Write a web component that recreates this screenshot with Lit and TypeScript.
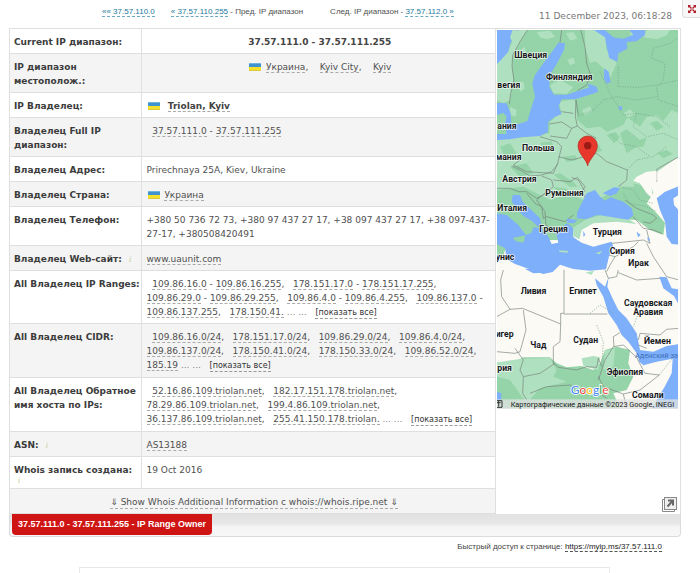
import { LitElement, html, css, svg, nothing } from "lit";
import { customElement } from "lit/decorators.js";

const NB = "\u00a0";

const link = (text: string, cls = "") => html`<a class=${cls} href="#">${text}</a>`;

/** Comma-separated list of links; a pair is drawn as "from - to". */
const list = (items: string[][]) =>
  items.map(
    (pair, i) =>
      html`${i ? `, ${NB} ` : NB + NB}${pair.map((p, j) => html`${j ? " - " : ""}${link(p)}`)}`
  );

const more = html` <span class="dots">... ...</span> ${NB} <button class="more" type="button">[показать все]</button>`;

const flag = html`<svg class="flag" width="12" height="8" viewBox="0 0 12 8" aria-hidden="true">
  <rect width="12" height="4" fill="#3f94cf" />
  <rect width="12" height="1" fill="#6db4de" />
  <rect y="4" width="12" height="4" fill="#f5e02c" />
  <rect x="0" y="7" width="12" height="1" fill="#dcc93c" />
</svg>`;

interface Row {
  label: string;
  value: unknown;
  hint?: "beside" | "below";
  center?: boolean;
  strong?: boolean;
  roomy?: boolean;
}

const rows: Row[] = [
  { label: "Current IP диапазон:", value: "37.57.111.0 - 37.57.111.255", center: true, strong: true },
  {
    label: "IP диапазон местополож.:",
    value: html`${flag} ${link("Украина")}, ${NB} ${NB}${link("Kyiv City")}, ${NB} ${NB}${link("Kyiv")}`,
    center: true,
  },
  { label: "IP Владелец:", value: html`${flag} ${NB}${link("Triolan, Kyiv")}`, strong: true },
  { label: "Владелец Full IP диапазон:", value: list([["37.57.111.0", "37.57.111.255"]]) },
  { label: "Владелец Адрес:", value: "Prirechnaya 25A, Kiev, Ukraine" },
  { label: "Владелец Страна:", value: html`${flag} ${link("Украина")}` },
  {
    label: "Владелец Телефон:",
    value: "+380 50 736 72 73, +380 97 437 27 17, +38 097 437 27 17, +38 097-437-27-17, +380508420491",
  },
  { label: "Владелец Web-сайт:", value: link("www.uaunit.com"), hint: "beside" },
  {
    label: "All Владелец IP Ranges:",
    value: html`${list([
      ["109.86.16.0", "109.86.16.255"],
      ["178.151.17.0", "178.151.17.255"],
      ["109.86.29.0", "109.86.29.255"],
      ["109.86.4.0", "109.86.4.255"],
      ["109.86.137.0", "109.86.137.255"],
      ["178.150.41."],
    ])}${more}`,
  },
  {
    label: "All Владелец CIDR:",
    roomy: true,
    value: html`${list([
      ["109.86.16.0/24"],
      ["178.151.17.0/24"],
      ["109.86.29.0/24"],
      ["109.86.4.0/24"],
      ["109.86.137.0/24"],
      ["178.150.41.0/24"],
      ["178.150.33.0/24"],
      ["109.86.52.0/24"],
    ])}, ${link("185.19")}${more}`,
  },
  {
    label: "All Владелец Обратное имя хоста по IPs:",
    roomy: true,
    value: html`${list([
      ["52.16.86.109.triolan.net"],
      ["182.17.151.178.triolan.net"],
      ["78.29.86.109.triolan.net"],
      ["199.4.86.109.triolan.net"],
      ["36.137.86.109.triolan.net"],
      ["255.41.150.178.triolan."],
    ])}${more}`,
  },
  { label: "ASN:", value: link("AS13188"), hint: "beside" },
  { label: "Whois запись создана:", value: "19 Oct 2016", hint: "below" },
];

const label = (x: number, y: number, t: string) => svg`<text class="place" x=${x} y=${y}>${t}</text>`;

@customElement("region-map")
export class RegionMap extends LitElement {
  static styles = css`
    :host { display: block; }
    svg { display: block; width: 100%; height: auto; }
    .sea { fill: #7eaffa; }
    .green { fill: #95d3a8; }
    .pale { fill: #afe0bf; }
    .sand { fill: #fcfaf4; }
    .border { fill: none; stroke: #77827b; stroke-width: 2; }
    .region { fill: none; stroke: #77a587; stroke-width: 2; stroke-dasharray: 4 4; }
    .place {
      font: 700 26px Roboto, "Liberation Sans", sans-serif;
      fill: #17191b; stroke: #fff; stroke-width: 5; stroke-opacity: 0.75;
      paint-order: stroke; stroke-linejoin: round;
    }
    .water { font: 400 22px Roboto, sans-serif; fill: #3f6fb8; }
    .brand {
      font: 400 36px Lato, sans-serif; stroke: #fff; stroke-width: 5; paint-order: stroke;
    }
    .credit { font: 22px Roboto, sans-serif; fill: #222; }
  `;

  render() {
    return html`<svg viewBox="0 0 543 1137" role="img" aria-label="Карта">
      <rect class="sand" width="543" height="1137" />
      <g transform="translate(-21,-90)">
        <path class="green" d="M21 90H567V470L540 486 500 516 480 550 490 580 470 610 500 640 525 668 520 705 480 690 440 660 330 655 290 680 250 690 250 720H20Z" />
        <path class="pale" d="M84 90H112L92 124 70 164 66 200 70 240 60 300 40 310 21 300V190L55 150Z" />
        <path class="pale" d="M140 96 180 92 196 110 170 118 150 112ZM92 150 104 140 110 160 96 172ZM84 250 100 244 104 266 90 276ZM228 100 250 96 262 116 240 122ZM232 180 250 172 256 190 240 196Z" />
        <path class="pale" d="M285 90H345L350 150 380 190 360 235 336 200 316 184 300 190 285 140Z" />
        <path class="pale" d="M470 90H540L530 106 500 118 460 112Z" />
        <path class="pale" d="M21 418 100 412 178 400 180 365 215 335 205 305 255 298 262 360 290 385 330 380 352 395 400 375 412 352 450 380 470 350 500 345 520 362 545 330 567 340V470L500 515 480 560 400 560 340 590 280 600 240 580 180 600 100 560 21 570Z" />
        <path class="green" d="M350 405 376 396 390 412 372 430ZM390 400 410 388 450 420 470 412 460 440 440 440 410 460ZM430 550 470 560 470 600 440 590ZM60 500 110 490 130 520 90 530ZM190 524 210 520 250 545 262 560 240 560ZM190 560 230 566 262 600 220 590ZM30 440 60 430 80 460 50 480ZM480 370 500 362 520 380 500 392ZM150 428 185 424 190 440 160 446ZM300 440 325 432 336 452 312 460ZM220 470 256 466 262 480 230 486ZM500 460 530 450 548 462 520 474Z" />
        <path class="pale" d="M180 255 210 240 250 262 230 282 190 280ZM60 320 80 330 78 350 60 345ZM330 150 352 170 370 200 350 205ZM420 96 448 100 440 118 424 116ZM400 340 420 328 436 342 416 352ZM276 330 300 318 306 334 284 346Z" />
        <path class="sea" d="M21 90H86L75 110 62 128 55 155 35 178 21 192Z" />
        <path class="pale" d="M68 90 90 92 80 108 68 128 60 112Z" />
        <path class="sea" d="M205 128 225 130 222 150 195 200 180 225 178 262 192 284 230 284 280 268 318 258 325 275 290 287 255 298 215 298 206 318 215 342 195 350 175 365 174 396 150 408 95 412 60 418 21 420V402L50 402 44 375 50 350 40 338 21 345V308L50 310 62 340 64 374 85 372 112 364 122 330 135 290 127 250 135 225 160 190 190 150Z" />
        <path class="sea" d="M312 90 345 112 350 140 358 175 382 185 385 160 412 146 410 126 440 124 465 105V90H418L430 104 400 116 370 112 345 90ZM343 205 356 215 362 246 350 252 342 235ZM292 252 310 256 320 272 302 274ZM385 318 396 320 396 330 387 330Z" />
        <path class="green" d="M24 352 42 352 46 378 40 398 24 396Z" />
        <path class="border" d="M112 90 90 125 68 165 66 200 72 240 62 280 58 312M215 90 210 128M272 90 285 140 290 190 302 225 290 255 262 272M258 300 256 350 262 378 290 400 320 415 M258 300 265 345M215 335 250 340M178 372 215 366 245 385 230 415 180 408M245 385 262 378M150 410 200 425 215 440 203 490 190 520 110 515 70 495 90 480" />
        <path class="region" d="M385 200 384 260 450 262 500 255 567 240M567 110 540 130 490 145 485 175 525 190 520 240 500 262 505 300 567 320M262 350 310 330 340 300 380 290 440 300 500 290M330 215 360 280 400 345 440 340 500 350 540 380M440 340 430 380 470 410 520 400 567 420M360 400 390 430 440 440 480 470" />
      </g>
      <g transform="translate(-21,330)">
        <path class="border" d="M65 78 90 90 120 108 155 105 185 95 205 70M155 108 185 120 190 140 160 165 140 175 110 155 85 155 60 145 20 145M190 120 240 125 262 112 285 140 275 155 288 175M110 160 135 190 155 200 160 235 170 230 225 245 250 225M170 155 140 180 165 215 168 255 180 265M205 50 245 60 320 40 350 65 412 90 410 120 385 140M245 112 265 120 285 155M567 50 540 65 500 88 500 125M405 180 440 205 490 225 500 235 480 250 460 245M430 230 460 265 490 270 515 280M366 310 460 300 480 310 470 270M355 345 375 350 430 320 445 305 M375 350 360 375 350 395 M470 310 490 350 530 410 567 420" />
        <path class="region" d="M390 140 430 150 450 180 490 190M400 160 420 190 470 200 500 215M412 90 440 60 490 50 530 20" />
        <path class="sand" d="M440 110 470 95 500 92 500 120 485 145 490 178 470 160 450 130 430 122Z" />
        <path class="sea" d="M290 160 315 150 330 170 345 182 362 172 400 185 425 205 430 225 412 242 370 238 320 225 290 238 260 235 262 215 275 190ZM338 160 372 142 390 144 380 160 362 168 350 164Z" />
        <path class="sea" d="M567 138 525 155 500 175 510 210 525 245 530 290 545 312 567 314V212L552 195 550 175 567 165Z" />
        <path class="sea" d="M20 220 50 225 85 255 108 285 125 278 130 262 148 264 125 242 100 228 80 205 65 185 68 165 90 165 98 185 150 235 155 265 175 290 185 312 205 308 200 285 186 270 215 262 232 250 250 265 248 290 275 308 310 320 340 312 365 305 370 320 358 345 348 388 300 392 250 387 210 374 188 396 160 402 120 388 75 372 50 358 46 330 20 315Z" />
        <path class="green" d="M68 294 106 286 100 308 78 304ZM20 312 46 325 40 350 20 345Z" />
        <path class="pale" d="M208 331 236 333 232 338 208 336ZM316 340 338 332 328 343ZM250 262 290 238 330 226 420 240 440 252 380 245 310 250 275 270 268 298 250 288ZM285 398 312 392 305 404Z" />
        <path class="sea" d="M230 236 262 240 252 250 232 248ZM280 272 286 285 280 290ZM440 275 452 285 444 292ZM472 290 480 298 474 305Z" />
      </g>
      <g transform="translate(-21,720)">
        <path class="green" d="M20 278 80 272 100 262 180 262 200 280 230 292 275 288 310 300 330 280 345 240 380 230 420 240 415 280 430 320 410 360 370 370 390 415H20Z" />
        <path class="pale" d="M20 278 95 266 180 264 200 300 190 320 230 335 150 355 110 400 60 330 20 320ZM275 265 310 258 330 262 325 300 280 288ZM345 240 375 236 370 290 340 300Z" />
        <path class="sea" d="M315 25 345 50 356 20 352 50 370 90 385 120 410 145 440 190 450 240 490 245 530 228 567 222V415H488L500 390 524 350 545 310 548 266 500 275 460 286 448 275 440 250 415 215 395 195 380 165 355 130 340 80 320 45Z" />
        <path class="sea" d="M508 20 530 22 545 55 567 58V105L552 78 520 55ZM20 365 34 370 34 390 20 390ZM104 -4H165L158 8 130 10Z" />
        <path class="border" d="M40 0 32 30 35 80 60 118 20 140M60 118 98 115 212 162 212 130 222 130V0M222 132H352M100 120 108 180 90 245 75 250 20 245M212 162 210 215 190 230 190 280 205 292 260 300 290 290 320 292 325 265 335 290M75 235 100 270 90 300 100 320 150 310 195 280M100 320 98 370 120 405M120 370 170 350 240 345 265 365 330 370 350 385M325 330 345 270 370 230 400 225 440 262 448 278 465 310 508 315 450 360 400 372 340 350 325 320M372 230 370 200 390 188M345 0 355 25 380 20 385 0M385 8 440 30 510 25M445 210 450 190 510 195 530 178 567 175M400 372 410 415M445 225 470 235" />
        <path class="region" d="M300 130 330 105 370 130M320 165 340 215 335 290M445 130 430 170M508 315 545 268" />
      </g>
      <g transform="translate(-21,-90)">
        ${label(73, 174, "Швеция")}${label(168, 241, "Финляндия")}${label(22, 265, "вегия")}
        ${label(22, 388, "ания")}${label(96, 453, "Польша")}${label(17, 479, "мания")}
        ${label(37, 545, "Австрия")}${label(166, 588, "Румыния")}${label(22, 632, "Италия")}
        ${label(148, 696, "Греция")}${label(308, 704, "Турция")}${label(359, 762, "Сирия")}
        ${label(415, 797, "Ирак")}${label(17, 780, "унис")}
        ${label(92, 883, "Ливия")}${label(238, 883, "Египет")}${label(402, 918, "Саудовская")}
        ${label(430, 944, "Аравия")}${label(17, 1012, "игер")}${label(121, 1044, "Чад")}
        ${label(250, 1028, "Судан")}${label(462, 1033, "Йемен")}${label(22, 1112, "рия")}
        ${label(350, 1125, "Эфиопия")}${label(426, 1195, "Сомали")}
        <text class="water" x="435" y="1075">Аденский за</text>
        <text class="brand" x="242" y="1182"><tspan fill="#4285f4">G</tspan><tspan fill="#ea4335">o</tspan><tspan fill="#fbbc05">o</tspan><tspan fill="#4285f4">g</tspan><tspan fill="#34a853">l</tspan><tspan fill="#ea4335">e</tspan></text>
        <path d="M293 498C290 478 264 462 264 437A29 29 0 0 1 322 437C322 462 296 478 293 498Z" fill="#e8382c" stroke="#b62a22" stroke-width="2" />
        <circle cx="293" cy="437" r="11" fill="#9d1b17" />
        <rect x="20" y="1198" width="550" height="30" fill="#dfe3e2" fill-opacity=".78" />
        <path d="M20 1202H36V1222H20M20 1208H32M26 1202V1220" fill="none" stroke="#333" stroke-width="3" />
        <text class="credit" x="62" y="1221">Картографические данные ©2023 Google, INEGI</text>
      </g>
    </svg>`;
  }
}

@customElement("app-root")
export class AppRoot extends LitElement {
  static styles = css`
    :host {
      display: block; background: #fff; color: #505050;
      font: 9px/14px "DejaVu Sans", Verdana, sans-serif;
    }
    a, button { color: inherit; font: inherit; text-decoration: none; }
    button { border: 0; padding: 0; margin: 0; background: none; cursor: pointer; }
    header { display: flex; height: 28px; align-items: flex-start; }
    nav {
      display: flex; flex: 1; padding: 7px 0 0 102px; white-space: nowrap;
      font: 8px/10px "Liberation Sans", Arial, sans-serif;
    }
    nav a { color: #23789c; border-bottom: 1px dashed #6aa9c2; }
    .prev { margin-left: 16px; }
    .next { margin-left: 27px; }
    time { padding-top: 9px; margin-right: 10px; color: #777; }
    .expand {
      display: flex; width: 18px; height: 18px; align-items: center; justify-content: center;
      border: 1px solid #ddd; border-width: 0 0 1px 1px; border-radius: 0 0 0 4px; background: #f7f7f7;
    }
    main { margin: 0 19px 0 9px; }
    .panel { display: flex; border: 1px solid #dfdfdf; border-bottom: 0; }
    table { flex: 1; min-width: 0; width: 100%; border-collapse: collapse; table-layout: fixed; }
    .labels { width: 131px; }
    th, td { padding: 6px 2px 4px 5px; text-align: left; vertical-align: top; border-bottom: 1px solid #dfdfdf; }
    th { padding: 6px 0 4px 4px; color: #3c3c3c; border-right: 1px solid #dfdfdf; }
    tr:nth-child(even) { background: #f4f4f4; }
    td a, .whois { border-bottom: 1px dashed #aaa; }
    .roomy { padding-bottom: 5px; }
    .whois { line-height: 12px; }
    .center { text-align: center; }
    .strong { font-weight: 700; color: #444; }
    .flag { vertical-align: -1px; margin: 0 2px 0 1px; }
    .hint { font: italic 8px/8px "Liberation Serif", serif; color: #c5c88a; }
    .beside { margin-left: 4px; }
    .below { display: block; height: 7px; padding-left: 4px; }
    .dots { color: #888; }
    .more { font-size: 8px; line-height: 10px; color: #333; border-bottom: 1px dashed #999; }
    aside {
      display: flex; width: 185px; flex-direction: column; justify-content: space-between; align-items: flex-end;
      box-sizing: border-box; padding: 1px 2px 1px 1px; border-left: 1px solid #dfdfdf;
    }
    region-map { width: 100%; }
    .open { display: flex; padding: 1px; }
    .bar {
      display: flex; height: 22px; padding-left: 2px; border: 1px solid #dcdcdc; border-top: 0; border-radius: 0 0 4px 4px;
      background: linear-gradient(#e2e2e2, #e6e6e6 40%, #f5f5f5 60%, #f7f7f7);
    }
    .tab {
      height: 21px; padding: 0 6px; border-radius: 0 0 4px 4px; background: #cf1513; color: #fff;
      font: 700 9px/20px "Liberation Sans", Arial, sans-serif; white-space: nowrap;
    }
    .quick {
      padding: 5px 19px 0 0; text-align: right; color: #444;
      font: 8px/10px "Liberation Sans", Arial, sans-serif;
    }
    .quick a { color: #222; border-bottom: 1px dashed #555; }
    footer { height: 5px; margin: 15px 90px 0 79px; border: 1px solid #e8e8e8; border-bottom: 0; }
  `;

  render() {
    return html`
      <header>
        <nav>
          <span><a href="#">«« 37.57.110.0</a></span>
          <span class="prev"><a href="#">« 37.57.110.255</a> - Пред. IP диапазон</span>
          <span class="next">След. IP диапазон - <a href="#">37.57.112.0 »</a></span>
        </nav>
        <time>11 December 2023, 06:18:28</time>
        <button class="expand" type="button" aria-label="Развернуть">
          <svg width="8" height="8" viewBox="0 0 8 8" fill="#b3202a">
            <path d="M0 0h3L2 1l2 2-1 1-2-2-1 1zM8 0v3L7 2 5 4 4 3l2-2-1-1zM0 8V5l1 1 2-2 1 1-2 2 1 1zM8 8H5l1-1-2-2 1-1 2 2 1-1z" />
          </svg>
        </button>
      </header>
      <main>
        <div class="panel">
          <table>
            <colgroup><col class="labels" /><col /></colgroup>
            <tbody>
              ${rows.map(
                (r) => html`<tr>
                  <th scope="row">${r.label}${r.hint ? html` <i class="hint ${r.hint}">i</i>` : nothing}</th>
                  <td class="${r.center ? "center" : ""} ${r.strong ? "strong" : ""} ${r.roomy ? "roomy" : ""}">${r.value}</td>
                </tr>`
              )}
              <tr>
                <td class="center" colspan="2">
                  <button class="whois" type="button">⇓ Show Whois Additional Information с whois://whois.ripe.net ⇓</button>
                </td>
              </tr>
            </tbody>
          </table>
          <aside>
            <region-map></region-map>
            <button class="open" type="button" aria-label="Открыть в новом окне">
              <svg width="15" height="15" viewBox="0 0 15 15" fill="none" stroke="#888">
                <path d="M2.5 2.5h-2v12h12v-2" />
                <rect x="2.5" y=".5" width="12" height="12" fill="#eee" />
                <path d="M5.5 9.5l4.5-5M6 3.5h5v5" stroke="#666" stroke-width="2" />
              </svg>
            </button>
          </aside>
        </div>
        <div class="bar"><span class="tab">37.57.111.0 - 37.57.111.255 - IP Range Owner</span></div>
        <div class="quick">Быстрый доступ к странице: <a href="#">https://myip.ms/37.57.111.0</a></div>
      </main>
      <footer></footer>
    `;
  }
}
